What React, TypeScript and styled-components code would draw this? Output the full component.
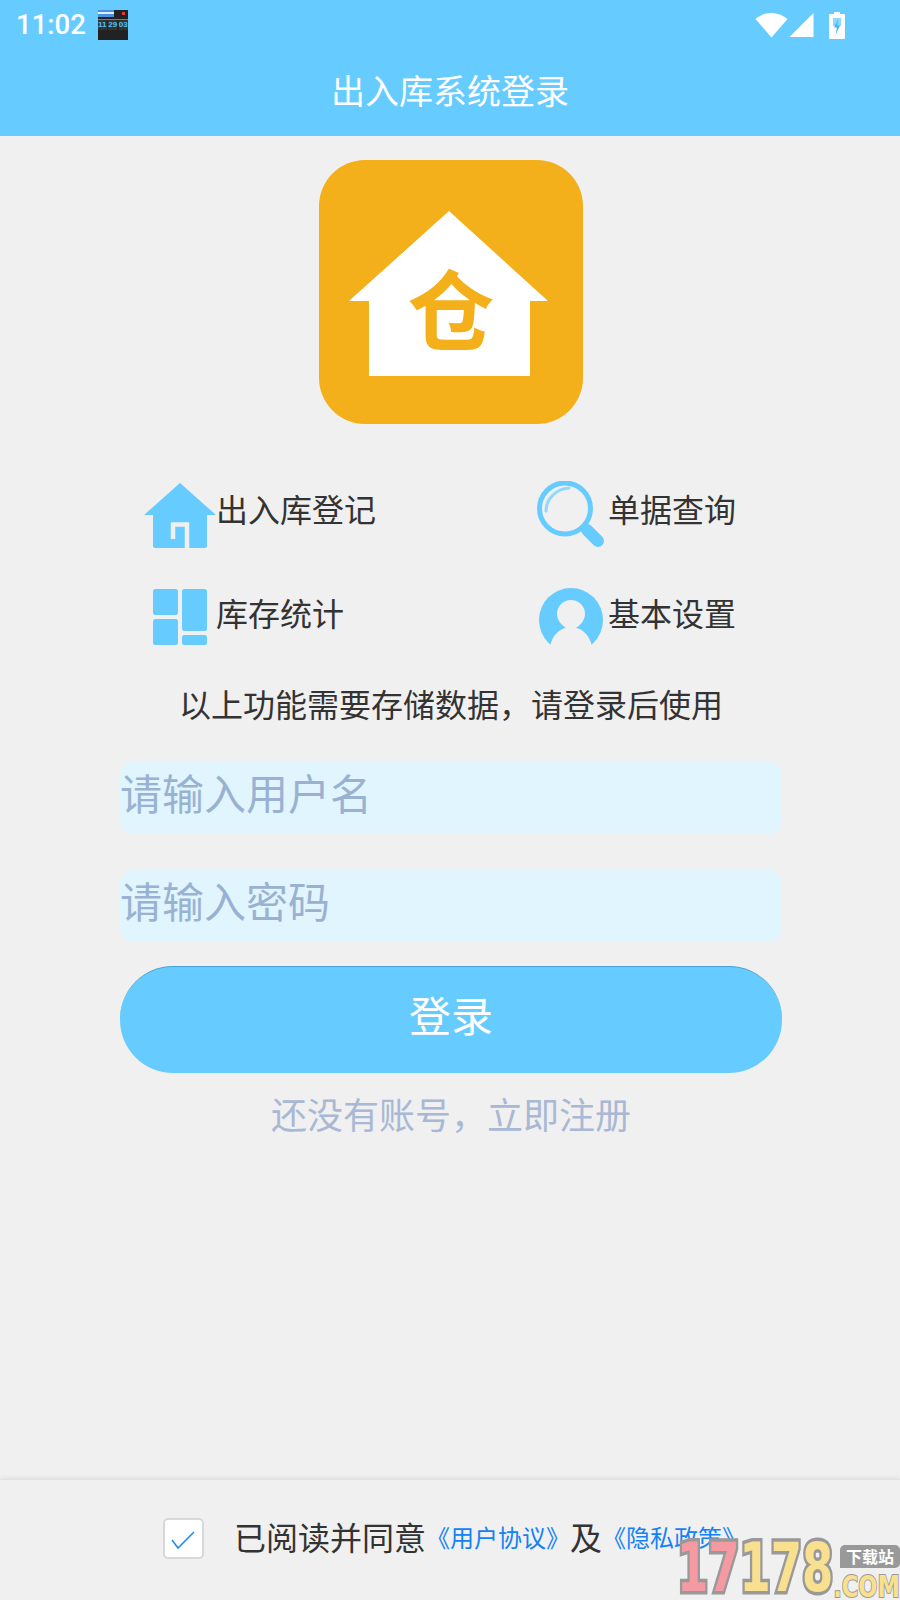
import React from 'react';
import styled, { createGlobalStyle } from 'styled-components';

const CJK = `'Noto Sans CJK SC', 'Noto Sans', sans-serif`;

const GlobalStyle = createGlobalStyle`
  html, body {
    margin: 0;
    padding: 0;
    background: #f0f0f0;
  }
  * {
    box-sizing: border-box;
  }
`;

export default function App(): React.ReactElement {
  return (
    <>
      <GlobalStyle />
      <Page>
        <Header>
          <StatusBar>
            <Time>11:02</Time>
            <Thumb>
              <ThumbBubble />
              <ThumbDots />
              <ThumbRow>
                <ThumbCell>11</ThumbCell>
                <ThumbCell>29</ThumbCell>
                <ThumbCell>03</ThumbCell>
              </ThumbRow>
            </Thumb>
            <StatusIcons>
              <svg width="33" height="26" viewBox="0 0 33 26">
                <path d="M16.5 25.5 0.5 7C5 3 10.5 1 16.5 1S28 3 32.5 7Z" fill="#fff" />
              </svg>
              <svg width="25" height="26" viewBox="0 0 25 26">
                <path d="M24.5 1V25H0.5Z" fill="#fff" />
              </svg>
              <Battery viewBox="0 0 16 27" width="16" height="27">
                <path d="M5 0h6v2h4a1 1 0 0 1 1 1v23a1 1 0 0 1-1 1H1a1 1 0 0 1-1-1V3a1 1 0 0 1 1-1h4z" fill="#fff" />
                <path d="M4 6h8v8h-8z" fill="#66cbff" opacity="0.75" />
                <path d="M9.5 7 5 15.5h3L6.5 23 11 13.5H8z" fill="#3fb4f2" />
              </Battery>
            </StatusIcons>
          </StatusBar>
          <Title>出入库系统登录</Title>
        </Header>

        <Content>
          <Logo>
            <svg width="264" height="264" viewBox="0 0 264 264">
              <path d="M130 51 229 141H211V216H50V141H30Z" fill="#fff" />
              <text x="132" y="184" textAnchor="middle" fontSize="87" fontWeight="700" fontFamily="'Noto Sans CJK SC', sans-serif" fill="#f3b01b">
                仓
              </text>
            </svg>
          </Logo>

          <Features>
            <Feature>
              <IconSlot $width={72}>
                <svg width="72" height="65" viewBox="0 0 72 65">
                  <path d="M36 0 72 32H63V63a2 2 0 0 1-2 2H11a2 2 0 0 1-2-2V32H0Z" fill="#66cbff" />
                  <path d="M29 56V41.5H43V65" fill="none" stroke="#f0f0f0" strokeWidth="4.5" />
                </svg>
              </IconSlot>
              <FeatureLabel $lift={14}>出入库登记</FeatureLabel>
            </Feature>
            <Feature>
              <IconSlot $width={68} $gap={3}>
                <svg width="68" height="68" viewBox="0 0 68 68">
                  <circle cx="28" cy="27.5" r="25.5" fill="none" stroke="#66cbff" strokeWidth="5" />
                  <path d="M9 30C9 18 19 8 32 7" fill="none" stroke="#8fd9ff" strokeWidth="3" strokeLinecap="round" />
                  <path d="M50 49 61 60" stroke="#66cbff" strokeWidth="12" strokeLinecap="round" />
                </svg>
              </IconSlot>
              <FeatureLabel $lift={14}>单据查询</FeatureLabel>
            </Feature>
            <Feature>
              <IconSlot $width={72}>
                <svg width="54" height="56" viewBox="0 0 54 56">
                  <rect x="0" y="0" width="25" height="26" rx="2.5" fill="#66cbff" />
                  <rect x="0" y="30" width="25" height="26" rx="2.5" fill="#66cbff" />
                  <rect x="29" y="0" width="25" height="42" rx="2.5" fill="#66cbff" />
                  <rect x="29" y="46" width="25" height="10" rx="2.5" fill="#66cbff" />
                </svg>
              </IconSlot>
              <FeatureLabel $lift={10}>库存统计</FeatureLabel>
            </Feature>
            <Feature>
              <IconSlot $width={68} $gap={3}>
                <svg width="64" height="58" viewBox="0 0 64 58">
                  <circle cx="32" cy="32" r="32" fill="#66cbff" />
                  <path d="M11 58C14 46 21 41 27 40C21 36 18 31 18 26A14 14 0 0 1 46 26C46 31 43 36 37 40C43 41 50 46 53 58Z" fill="#f0f0f0" />
                </svg>
              </IconSlot>
              <FeatureLabel $lift={10}>基本设置</FeatureLabel>
            </Feature>
          </Features>

          <Notice>以上功能需要存储数据，请登录后使用</Notice>

          <Form>
            <Field placeholder="请输入用户名" />
            <Field placeholder="请输入密码" type="password" />
            <LoginButton>登录</LoginButton>
            <RegisterLink>还没有账号，立即注册</RegisterLink>
          </Form>
        </Content>

        <Footer>
          <CheckBox>
            <svg width="37" height="37" viewBox="0 0 37 37">
              <path d="M7 20 13 28 29 12" fill="none" stroke="#1e88f0" strokeWidth="1.5" />
            </svg>
          </CheckBox>
          <AgreeText>已阅读并同意</AgreeText>
          <PolicyLink>《用户协议》</PolicyLink>
          <AgreeText>及</AgreeText>
          <PolicyLink>《隐私政策》</PolicyLink>
        </Footer>

        <Watermark>
          <Digits>
            <Pink>17</Pink>
            <Yellow>178</Yellow>
          </Digits>
          <Bubble>下载站</Bubble>
          <Dotcom>.COM</Dotcom>
        </Watermark>
      </Page>
    </>
  );
}

const Page = styled.div`
  position: relative;
  width: 900px;
  height: 1600px;
  overflow: hidden;
  display: flex;
  flex-direction: column;
  background: #f0f0f0;
  font-family: ${CJK};
`;

const Header = styled.div`
  height: 136px;
  background: #66cbff;
  display: flex;
  flex-direction: column;
`;

const StatusBar = styled.div`
  height: 50px;
  display: flex;
  align-items: center;
  padding: 0 55px 0 16px;
`;

const Time = styled.div`
  font-family: Roboto, sans-serif;
  font-size: 27.5px;
  font-weight: 500;
  color: #fff;
  line-height: 50px;
`;

const Thumb = styled.div`
  position: relative;
  width: 30px;
  height: 30px;
  margin-left: 12px;
  background: #222;
  display: flex;
  flex-direction: column;
  justify-content: flex-end;
  padding-bottom: 10px;
`;

const ThumbBubble = styled.div`
  position: absolute;
  left: 0;
  top: 0;
  width: 16px;
  height: 7px;
  background: linear-gradient(#4a90e2 2px, #dfeeff 2px, #dfeeff 4px, #4a90e2 4px);
`;

const ThumbDots = styled.div`
  position: absolute;
  right: 3px;
  top: 2px;
  width: 3px;
  height: 3px;
  background: #e53935;
`;

const ThumbRow = styled.div`
  display: flex;
  justify-content: space-between;
  border-top: 1px solid #777;
`;

const ThumbCell = styled.div`
  width: 9px;
  font-family: 'Liberation Sans', sans-serif;
  font-size: 8px;
  font-weight: 700;
  line-height: 10px;
  color: #4fc3f7;
  text-align: center;
  background: #333;
`;

const StatusIcons = styled.div`
  margin-left: auto;
  display: flex;
  align-items: center;
  gap: 1px;
`;

const Battery = styled.svg`
  margin-left: 14px;
`;

const Title = styled.div`
  height: 86px;
  padding-top: 2px;
  text-align: center;
  font-size: 34px;
  line-height: 76px;
  color: #fff;
`;

const Content = styled.div`
  flex: 1;
  padding-left: 2px;
  display: flex;
  flex-direction: column;
  align-items: center;
`;

const Logo = styled.div`
  width: 264px;
  height: 264px;
  margin-top: 24px;
  border-radius: 46px;
  background: #f3b01b;
  overflow: hidden;
`;

const Features = styled.div`
  align-self: flex-start;
  margin: 57px 0 0 142px;
  display: grid;
  grid-template-columns: 393px auto;
  grid-auto-rows: 68px;
  row-gap: 34px;
`;

const Feature = styled.div`
  display: flex;
  align-items: center;
`;

const IconSlot = styled.div<{ $width: number; $gap?: number }>`
  width: ${p => p.$width}px;
  height: 68px;
  margin-right: ${p => p.$gap ?? 0}px;
  display: flex;
  align-items: center;
  justify-content: center;
  flex-shrink: 0;
  svg {
    display: block;
  }
`;

const FeatureLabel = styled.div<{ $lift: number }>`
  padding-bottom: ${p => p.$lift}px;
  font-size: 32px;
  line-height: 44px;
  color: #333;
`;

const Notice = styled.div`
  margin-top: 29px;
  font-size: 32px;
  line-height: 46px;
  color: #333;
`;

const Form = styled.div`
  width: 662px;
  margin-top: 36px;
  display: flex;
  flex-direction: column;
`;

const Field = styled.input`
  width: 100%;
  height: 72px;
  margin-bottom: 36px;
  padding: 0 0 14px 0;
  border: none;
  outline: none;
  border-radius: 14px;
  background: #e1f5fe;
  font-family: ${CJK};
  font-size: 42px;
  &::placeholder {
    color: #9ab2d2;
    opacity: 1;
  }
  & + & {
    margin-bottom: 24px;
  }
`;

const LoginButton = styled.button`
  width: 100%;
  height: 107px;
  padding: 0 0 14px;
  border: none;
  border-top: 1px solid #4aa3d6;
  border-radius: 53px;
  background: #66cbff;
  color: #fff;
  font-family: ${CJK};
  font-size: 42px;
`;

const RegisterLink = styled.div`
  margin-top: 14px;
  text-align: center;
  font-size: 36px;
  line-height: 52px;
  color: #a9b8d4;
`;

const Footer = styled.div`
  height: 121px;
  padding: 0 0 4px 163px;
  display: flex;
  align-items: center;
  border-top: 1px solid #e2e2e2;
  box-shadow: 0 -2px 4px rgba(0, 0, 0, 0.06);
`;

const CheckBox = styled.div`
  width: 41px;
  height: 41px;
  margin-right: 30px;
  border: 2px solid #d8d8d8;
  border-radius: 5px;
  background: #fff;
  svg {
    display: block;
  }
`;

const AgreeText = styled.span`
  margin-bottom: 4px;
  font-size: 32px;
  color: #333;
`;

const PolicyLink = styled.span`
  margin-bottom: 4px;
  font-size: 24px;
  color: #1482f5;
`;

const Watermark = styled.div`
  position: absolute;
  left: 677px;
  top: 1540px;
  width: 223px;
  height: 60px;
  pointer-events: none;
`;

const Digits = styled.div`
  position: absolute;
  left: 0;
  top: -4px;
  font-family: 'DejaVu Sans', sans-serif;
  font-weight: 700;
  font-size: 68px;
  line-height: 64px;
  white-space: nowrap;
  transform: scaleX(0.66);
  transform-origin: left top;
  -webkit-text-stroke: 7px #999;
  paint-order: stroke fill;
`;

const Pink = styled.span`
  color: #f59aa3;
`;

const Yellow = styled.span`
  color: #f8e08e;
`;

const Bubble = styled.div`
  position: absolute;
  right: 0;
  top: 5px;
  width: 60px;
  height: 23px;
  border-radius: 5px 5px 5px 0;
  background: #999;
  color: #fff;
  font-size: 16px;
  font-weight: 700;
  line-height: 22px;
  text-align: center;
`;

const Dotcom = styled.div`
  position: absolute;
  right: 0;
  bottom: 0;
  font-family: 'DejaVu Sans', sans-serif;
  font-weight: 700;
  font-size: 30px;
  line-height: 26px;
  white-space: nowrap;
  color: #f8e08e;
  transform: scaleX(0.75);
  transform-origin: right center;
  -webkit-text-stroke: 2px #999;
  paint-order: stroke fill;
`;
